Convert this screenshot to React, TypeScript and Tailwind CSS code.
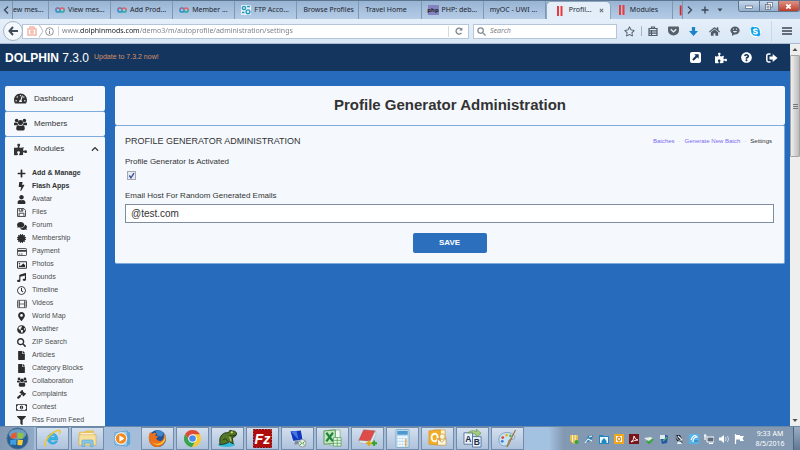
import React from 'react';
import {
  FaTachometerAlt, FaPuzzlePiece, FaPlus, FaBolt, FaUser, FaComments,
  FaCertificate, FaRegImage, FaMusic, FaRegClock, FaMapMarkerAlt,
  FaGlobeAmericas, FaSearch, FaFile, FaGavel, FaRegMoneyBillAlt, FaFilter, FaChevronUp,
  FaQuestionCircle, FaHome, FaRegStar, FaSkype,
} from 'react-icons/fa';

interface Tab {
  title: string;
  icon?: 'loops' | 'joomla' | 'cpanel' | 'php';
  active?: boolean;
}

interface IconProps {
  size: number;
  className?: string;
}

const tabs: Tab[] = [
  { title: 'View mes...', icon: 'loops' },
  { title: 'Add Prod...', icon: 'loops' },
  { title: 'Member ...', icon: 'loops' },
  { title: 'FTP Acco...', icon: 'cpanel' },
  { title: 'Browse Profiles' },
  { title: 'Travel Home' },
  { title: 'PHP: deb...', icon: 'php' },
  { title: 'myOC - UWI ...' },
  { title: 'Profil...', icon: 'joomla', active: true },
  { title: 'Modules', icon: 'joomla' },
];

const GroupIcon: React.FC<IconProps> = ({ size, className }) => (
  <svg viewBox="0 0 14 13" width={size} height={size} className={className} fill="#2c2c2c">
    <circle cx="2.800" cy="2.200" r="1.900" />
    <circle cx="11.200" cy="2.200" r="1.900" />
    <path d="M0 7V5.500Q0 4 1.500 4.300q1.300.7 2.600 0Q3.500 6 4.500 7.200H1Q0 7.200 0 7zM14 7V5.500q0-1.500-1.500-1.200-1.300.7-2.600 0 .6 1.700-.4 2.900H13q1 0 1-.2z" />
    <circle cx="7" cy="4.400" r="2.700" />
    <path d="M2.400 11.200Q2.300 7.400 4.500 7.200q2.500 1.500 5 0 2.200.2 2.100 4Q11.500 13 10 13H4q-1.500 0-1.600-1.800z" />
  </svg>
);

const FloppyIcon: React.FC<IconProps> = ({ size, className }) => (
  <svg viewBox="0 0 10 10" width={size} height={size} className={className} fill="none" stroke="#3c3c3c">
    <path d="M0.600 0.600h6.900l1.900 1.900v6.900H0.600zM2.500 0.600v2.900h4V0.600M2.300 9.400V5.800h5.400v3.600" />
    <path d="M5.300 1v2" strokeWidth="1.200" />
  </svg>
);

const CardIcon: React.FC<IconProps> = ({ size, className }) => (
  <svg viewBox="0 0 12 10" width={size} height={size} className={className} fill="none" stroke="#3c3c3c">
    <rect x="0.600" y="0.800" width="10.800" height="8.400" rx="0.800" />
    <path d="M0.600 3.600h10.800" strokeWidth="2.200" />
    <path d="M2 7.500h1.500M4.300 7.500h2.400" />
  </svg>
);

const FilmIcon: React.FC<IconProps> = ({ size, className }) => (
  <svg viewBox="0 0 12 10" width={size} height={size} className={className} fill="none" stroke="#3c3c3c" strokeWidth="0.900">
    <rect x="0.600" y="0.600" width="10.800" height="8.800" rx="0.600" />
    <path d="M3 0.600v8.800M9 0.600v8.800M3 5h6M0.600 2.800H3M0.600 5H3M0.600 7.200H3M9 2.800h2.400M9 5h2.400M9 7.200h2.400" />
  </svg>
);

const modules: { label: string; icon: React.ComponentType<any>; bold?: boolean; size?: number }[] = [
  { label: 'Add & Manage', icon: FaPlus, bold: true },
  { label: 'Flash Apps', icon: FaBolt, bold: true },
  { label: 'Avatar', icon: FaUser },
  { label: 'Files', icon: FloppyIcon },
  { label: 'Forum', icon: FaComments, size: 10 },
  { label: 'Membership', icon: FaCertificate },
  { label: 'Payment', icon: CardIcon, size: 10 },
  { label: 'Photos', icon: FaRegImage, size: 10 },
  { label: 'Sounds', icon: FaMusic },
  { label: 'Timeline', icon: FaRegClock },
  { label: 'Videos', icon: FilmIcon, size: 10 },
  { label: 'World Map', icon: FaMapMarkerAlt },
  { label: 'Weather', icon: FaGlobeAmericas },
  { label: 'ZIP Search', icon: FaSearch },
  { label: 'Articles', icon: FaFile },
  { label: 'Category Blocks', icon: FaFile },
  { label: 'Collaboration', icon: GroupIcon, size: 10 },
  { label: 'Complaints', icon: FaGavel },
  { label: 'Contest', icon: FaRegMoneyBillAlt, size: 11 },
  { label: 'Rss Forum Feed', icon: FaFilter },
];

const TabIcon: React.FC<{ name: NonNullable<Tab['icon']> }> = ({ name }) => {
  if (name === 'loops') {
    return (
      <svg viewBox="0 0 10 10" className="size-[10px] shrink-0" fill="none" strokeWidth="1.500">
        <circle cx="3" cy="5" r="2.100" stroke="#2d8fd0" />
        <path d="M5 5a2.100 2.100 0 0 1 4.200 0" stroke="#e0606a" />
        <path d="M9.200 5A2.100 2.100 0 0 1 5 5" stroke="#2fa9a2" />
        <path d="M1 4.400a2.100 2.100 0 0 1 2-1.500" stroke="#d0607a" />
      </svg>
    );
  }
  if (name === 'joomla') {
    return (
      <svg viewBox="0 0 10 10" className="size-[10px] shrink-0" fill="#ea3a3c">
        <rect x="2" width="2" height="10" />
        <rect x="5.500" width="2" height="10" />
      </svg>
    );
  }
  if (name === 'cpanel') {
    return (
      <svg viewBox="0 0 10 10" className="size-[10px] shrink-0">
        <rect width="10" height="10" rx="1" fill="#e6f4fa" />
        <g fill="none" stroke="#2696bd" strokeWidth="1.400">
          <circle cx="3" cy="3" r="1.600" />
          <circle cx="7" cy="6.800" r="1.900" />
          <path d="M6 1.500h3M1 7.500h2.500" />
        </g>
      </svg>
    );
  }
  return (
    <span className="flex h-[10px] w-[11px] shrink-0 items-center justify-center bg-[#8582c0] text-[6px] leading-none font-bold text-[#222]">
      php
    </span>
  );
};

const TabStrip: React.FC = () => (
  <div className="flex h-[19px] shrink-0 border-t border-[#5b7490] bg-linear-to-b from-[#98b4d3] to-[#b5cce6] text-[7px] text-[#1c2530]">
    <button aria-label="Scroll tabs left" className="flex w-[13px] items-center justify-center border-r border-[#7e93ab]">
      <svg viewBox="0 0 6 8" className="h-2 w-1.5" fill="none" stroke="#3d4a58" strokeWidth="1.400"><path d="M5 0.500 1.500 4 5 7.500" /></svg>
    </button>
    <button className="w-[36px] shrink-0 overflow-hidden border-r border-[#8097b4] text-left whitespace-nowrap">ew mes...</button>
    {tabs.map((tab, i) => (
      <button
        key={i}
        className={
          tab.active
            ? 'flex min-w-0 flex-1 items-center gap-[4px] overflow-hidden rounded-t-[5px] border-x border-t border-[#8da5c0] bg-[#e3eef9] pl-2 whitespace-nowrap'
            : 'flex min-w-0 flex-1 items-center gap-[3px] overflow-hidden border-r border-[#8097b4] pl-[6px] whitespace-nowrap'
        }
      >
        {tab.icon && <TabIcon name={tab.icon} />}
        <span>{tab.title}</span>
        {tab.active && (
          <svg viewBox="0 0 6 6" className="mr-[6px] ml-auto size-[5px]" stroke="#68727d" strokeWidth="1.300"><path d="M1 1l4 4M5 1 1 5" /></svg>
        )}
      </button>
    ))}
    <div className="flex w-[127px] shrink-0 justify-between">
      <div className="flex items-center">
        <div className="h-full w-[10px] border-r border-[#7e93ab]">
          <svg viewBox="0 0 10 18" className="h-full w-full"><path d="M8.500 4v11" stroke="#d02c30" strokeWidth="2" /></svg>
        </div>
        <button aria-label="Scroll tabs right" className="px-1">
          <svg viewBox="0 0 6 8" className="h-2 w-1.5" fill="none" stroke="#3d4a58" strokeWidth="1.400"><path d="M1 0.500 4.500 4 1 7.500" /></svg>
        </button>
        <button aria-label="New tab" className="px-1">
          <svg viewBox="0 0 8 8" className="size-[8px]" stroke="#3d4a58" strokeWidth="1.400"><path d="M4 0.500v7M0.500 4h7" /></svg>
        </button>
        <button aria-label="List all tabs" className="px-1">
          <svg viewBox="0 0 6 4" className="h-[4px] w-[6px]" fill="#3d4a58"><path d="M0.500 0.500h5L3 3.500z" /></svg>
        </button>
      </div>
      <div className="flex h-[11px] overflow-hidden rounded-b-[3px] border border-t-0 border-[#5f7690]">
        <button aria-label="Minimize" className="flex w-[21px] items-center justify-center border-r border-[#5f7690] bg-linear-to-b from-[#c5d6ea] to-[#96b0cd]">
          <svg viewBox="0 0 8 6" className="h-[6px] w-[8px]"><rect x="0.500" y="3" width="7" height="2.500" fill="#fff" stroke="#56657a" strokeWidth="0.700" /></svg>
        </button>
        <button aria-label="Restore" className="flex w-[19px] items-center justify-center border-r border-[#5f7690] bg-linear-to-b from-[#c5d6ea] to-[#96b0cd]">
          <svg viewBox="0 0 8 8" className="size-[8px]" fill="#fff" stroke="#56657a" strokeWidth="0.700"><rect x="2.500" y="0.500" width="5" height="4.500" /><rect x="0.500" y="2.500" width="5" height="5" /><rect x="2" y="4" width="2" height="2" /></svg>
        </button>
        <button aria-label="Close" className="flex w-[20px] items-center justify-center bg-linear-to-b from-[#dd9184] to-[#bf3a26]">
          <svg viewBox="0 0 8 8" className="size-[7px]" stroke="#fff" strokeWidth="2"><path d="M1.500 1.500l5 5M6.500 1.500l-5 5" /></svg>
        </button>
      </div>
    </div>
  </div>
);

const NavBar: React.FC = () => (
  <div className="flex h-[25px] shrink-0 items-center border-b border-[#a9bccf] bg-linear-to-b from-[#e5effa] to-[#d9e7f5] pr-2 pl-[3px] text-[7px]">
    <button aria-label="Back" className="z-10 flex size-5 shrink-0 items-center justify-center rounded-full border border-[#a4b4c4] bg-[#f4f8fc]">
      <svg viewBox="0 0 10 10" className="size-[10px]" fill="none" stroke="#3f4c5a" strokeWidth="2"><path d="M5 1 1.500 5 5 9M2 5h8" /></svg>
    </button>
    <div className="-ml-px flex h-[15px] min-w-0 flex-1 items-center border border-[#b4c6d8] bg-white pl-1">
      <svg viewBox="0 0 10 10" className="size-[10px] shrink-0" fill="none" stroke="#f1b7a8" strokeWidth="1.500">
        <path d="M1 3h8v6H1zM3 3V1h4v2" /><circle cx="5" cy="6" r="1.300" />
      </svg>
      <svg viewBox="0 0 8 14" className="h-[14px] w-[8px] shrink-0" fill="none" stroke="#b8bec5"><path d="M2 0.500 6 7 2 13.500" /></svg>
      <svg viewBox="0 0 10 10" className="size-[9px] shrink-0" fill="none" stroke="#84888d"><circle cx="5" cy="5" r="4.300" /><path d="M5 2.200v1.200M5 4.300v3.400" strokeWidth="1.200" /></svg>
      <div className="mr-[3px] ml-1 h-[10px] border-l border-[#cfd4d9]" />
      <input
        aria-label="Address"
        type="text"
        defaultValue="www.dolphinmods.com/demo3/m/autoprofile/administration/settings"
        className="min-w-0 flex-1 bg-linear-[90deg,#777b80_18px,#16191d_18px,#16191d_77px,#777b80_77px] bg-clip-text text-transparent outline-none"
      />
      <button aria-label="Reload" className="flex h-[11px] w-[20px] items-center justify-center border-l border-[#d3dae1]">
        <svg viewBox="0 0 10 10" className="size-[8px]" fill="none" stroke="#75818c" strokeWidth="1.600"><path d="M8 7.300A3.700 3.700 0 1 1 8 3" /><path d="M9.200 0.500v4h-4z" fill="#75818c" stroke="none" /></svg>
      </button>
    </div>
    <div className="ml-1 flex h-[15px] w-[144px] items-center gap-1 border border-[#b4c6d8] bg-white pl-[3px]">
      <svg viewBox="0 0 10 10" className="size-[9px]" fill="none" stroke="#828b94" strokeWidth="1.400"><circle cx="4" cy="4" r="3" /><path d="m6.300 6.300 3.200 3.200" /></svg>
      <input aria-label="Search" type="text" placeholder="Search" className="min-w-0 flex-1 italic outline-none placeholder:text-[#7c8085]" />
    </div>
    <div className="ml-[7px] flex w-[168px] shrink-0 items-center justify-between text-[#4e5a66]">
      <button aria-label="Bookmark"><FaRegStar size={11} /></button>
      <span className="-mx-1 h-[10px] border-l border-[#a8b6c4]" />
      <button aria-label="Bookmarks list">
        <svg viewBox="0 0 10 10" className="size-[10px]" fill="none" stroke="currentColor" strokeWidth="1.200"><path d="M1 2.500h8v7H1zM3.500 2.500V1h3v1.500M1 4.800h8M1 7.200h8M3.500 4v5.500" /></svg>
      </button>
      <button aria-label="Pocket">
        <svg viewBox="0 0 12 11" className="h-[10px] w-[11px]"><path d="M1 0.500h10q1 0 1 1V5A6 5.500 0 0 1 0 5V1.500q0-1 1-1z" fill="#55606b" /><path d="m3 3.500 3 3 3-3" fill="none" stroke="#eaf2fa" strokeWidth="1.500" /></svg>
      </button>
      <button aria-label="Downloads">
        <svg viewBox="0 0 10 10" className="size-[9px]" fill="#1d83ca"><path d="M3.200 0h3.600v4.500H10L5 10 0 4.500h3.200z" /></svg>
      </button>
      <button aria-label="Home"><FaHome size={11} /></button>
      <button aria-label="Chat">
        <svg viewBox="0 0 10 10" className="size-[10px]"><ellipse cx="5" cy="4.500" rx="4.600" ry="4" fill="#55606b" /><path d="M2 7v3l3-2z" fill="#55606b" /><path d="M2.800 5a2.300 2 0 0 0 4.400 0z" fill="#dfe9f3" /><path d="M3 3.200h1M6 3.200h1" stroke="#dfe9f3" /></svg>
      </button>
      <button aria-label="Skype" className="rounded-full bg-white text-[#12a5ea]"><FaSkype size={11} /></button>
      <span className="h-[21px] border-l border-[#cbd8e4]" />
      <button aria-label="Menu">
        <svg viewBox="0 0 10 8" className="h-[8px] w-[10px]" stroke="#3c4650" strokeWidth="1.500"><path d="M0 1h10M0 4h10M0 7h10" /></svg>
      </button>
    </div>
  </div>
);

const SiteHeader: React.FC = () => (
  <header className="flex h-[27px] shrink-0 items-center justify-between bg-[#14365e] pr-3 pl-[5px] text-white">
    <div className="flex items-center gap-[5px]">
      <h1 className="text-[12px]"><b>DOLPHIN</b> 7.3.0</h1>
      <a href="#" className="text-[7px] text-[#d68e6a]">Update to 7.3.2 now!</a>
    </div>
    <nav className="flex items-center gap-[14px]">
      <a href="#" aria-label="Open site">
        <svg viewBox="0 0 11 11" className="size-[11px]"><rect width="11" height="11" rx="2" fill="#fff" /><path d="M4.200 2.300h4.500v4.500L7.200 5.300 3.700 8.800 2.200 7.300l3.500-3.500z" fill="#14365e" /></svg>
      </a>
      <a href="#" aria-label="Extensions"><FaPuzzlePiece size={12} /></a>
      <a href="#" aria-label="Help"><FaQuestionCircle size={11} /></a>
      <a href="#" aria-label="Log out">
        <svg viewBox="0 0 12 10" className="h-[10px] w-[12px]"><path d="M4.500 1H2.500Q0.800 1 0.800 2.700v4.600Q0.800 9 2.500 9h2" fill="none" stroke="#fff" strokeWidth="1.500" /><path d="M3.500 3.500h3.200V1L11.500 5 6.700 9V6.500H3.500z" fill="#fff" /></svg>
      </a>
    </nav>
  </header>
);

const Sidebar: React.FC = () => (
  <nav className="w-[100px] shrink-0 text-[8px] text-[#333]">
    <a href="#" className="flex h-[25px] items-center rounded-[2px] bg-[#f5f9fe] pl-[9px]">
      <FaTachometerAlt size={13} className="mr-[7px]" />Dashboard
    </a>
    <a href="#" className="flex h-[25px] items-center rounded-[2px] border-t border-[#7fabdc] bg-[#f5f9fe] pl-[9px]">
      <GroupIcon size={13} className="mr-[7px]" />Members
    </a>
    <div className="rounded-[2px] border-t border-[#7fabdc] bg-[#f5f9fe]">
      <button className="flex h-[24px] w-full items-center pr-[6px] pl-[9px]">
        <FaPuzzlePiece size={13} className="mr-[7px]" />Modules
        <FaChevronUp size={8} className="ml-auto" />
      </button>
      <ul className="pt-[6px] pb-3 text-[7px] text-[#4c4c4c]">
        {modules.map(({ label, icon: Icon, bold, size }) => (
          <li key={label}>
            <a href="#" className={bold ? 'flex h-[13px] items-center font-bold text-[#333]' : 'flex h-[13px] items-center'}>
              <span className="flex w-[27px] shrink-0 justify-center pr-[5px] pl-[11px] text-[#2c2c2c]"><Icon size={size ?? 9} className="shrink-0" /></span>
              {label}
            </a>
          </li>
        ))}
      </ul>
    </div>
  </nav>
);

const SettingsPanel: React.FC = () => (
  <main className="min-w-0 flex-1 text-[#333]">
    <div className="flex h-[39px] items-center justify-center rounded-[2px] bg-[#f5f9fe]">
      <h2 className="text-[15px] font-bold">Profile Generator Administration</h2>
    </div>
    <section className="rounded-[2px] border-t border-r border-b border-[#7fabdc] bg-[#f5f9fe] px-[10px] pb-[10px] text-[8px]">
      <div className="flex items-center justify-between pt-[9px]">
        <h3 className="text-[9px] leading-3">PROFILE GENERATOR ADMINISTRATION</h3>
        <div className="flex gap-1 pr-[2px] text-[6px] text-[#7d6bee]">
          <a href="#">Batches</a>
          <span className="text-[#aaa]">·</span>
          <a href="#">Generate New Batch</a>
          <span className="text-[#aaa]">·</span>
          <span className="text-[#333]">Settings</span>
        </div>
      </div>
      <form onSubmit={(e) => e.preventDefault()}>
        <label htmlFor="activated" className="mt-[9px] block leading-3">Profile Generator Is Activated</label>
        <div className="relative mt-[3px] ml-[2px] size-[9px]">
          <input id="activated" type="checkbox" defaultChecked className="block size-[9px] appearance-none border border-[#a5a9ad] bg-[#e6eaf0]" />
          <svg viewBox="0 0 8 8" className="pointer-events-none absolute inset-0 size-[9px]" fill="none" stroke="#37529c" strokeWidth="1.200"><path d="m2 4 1.500 2L6.200 1.800" /></svg>
        </div>
        <label htmlFor="email-host" className="mt-[10px] block leading-3">Email Host For Random Generated Emails</label>
        <input
          id="email-host"
          type="text"
          defaultValue="@test.com"
          className="mt-[2px] block h-[19px] w-full border border-[#7e8ea0] bg-white px-[5px] text-[10px] outline-none"
        />
        <button type="submit" className="mx-auto mt-[10px] block h-5 w-[74px] rounded-[2px] bg-[#2c6fbd] text-[8px] font-bold text-white">
          SAVE
        </button>
      </form>
    </section>
  </main>
);

const taskIcons: { name: string; drawing: React.ReactNode; plain?: boolean }[] = [
  {
    name: 'Internet Explorer',
    drawing: (
      <>
        <path d="M15.500 11.500H7.800c.3 2.800 4 3.400 5.200 1h2.300C13.800 17.500 5 17.500 4.600 10.300 5 3 14.500 2.500 15.500 9.500zM7.800 8.800h5c-.4-2.500-4.400-2.700-5 0z" fill="#35b5e8" stroke="#1d87c4" strokeWidth="0.400" />
        <path d="M3.500 17.500C-1 18 4 7.500 12 3c6-3.300 7-1 5.500 2" fill="none" stroke="#f0c42f" strokeWidth="1.600" />
      </>
    ),
  },
  {
    name: 'Explorer',
    drawing: (
      <>
        <path d="M1 3h6l1-1.500h9V6h1.500v11H1z" fill="#e8c35d" />
        <path d="M2.500 4.500h14v3h-14z" fill="#fff" />
        <path d="M1 6h18v11H1z" fill="#f6e09a" stroke="#d0a642" strokeWidth="0.600" />
        <path d="M4 18.500V13q0-1.500 1.500-1.500h9q1.500 0 1.500 1.500v5.500h-3V15H7v3.500z" fill="#87c5e6" stroke="#4f99c6" strokeWidth="0.500" />
      </>
    ),
  },
  {
    name: 'Media Player',
    plain: true,
    drawing: (
      <>
        <path d="m2 4 13-2v16L2 16.500z" fill="#9dccee" stroke="#4b95cb" strokeWidth="0.700" />
        <path d="m15 2 3 2v12l-3 2z" fill="#5ea6d8" />
        <circle cx="8.500" cy="10" r="6" fill="#f28a20" stroke="#fff" />
        <path d="m6.700 6.700 5.500 3.300-5.500 3.300z" fill="#fff" />
      </>
    ),
  },
  {
    name: 'Firefox',
    drawing: (
      <>
        <circle cx="10" cy="10" r="9" fill="#21539d" />
        <path d="M8 2q6-2 8.500 3L14 8l-4-1z" fill="#4188cb" />
        <path d="M2 3.500 4.500 5Q7 3 9 4.500L7.500 7l3.500 1-2.500 2q1 3 5 2.500 4-1 3-7.500l1.500 1.500c3 11-10 16-15 9.500C.5 13 0 8 2 3.500z" fill="#ea711c" />
        <path d="M17.500 5q3 8-3.500 11-6 2.500-10-2 5 3 9.500.500Q19 11 17.500 5z" fill="#ffc735" />
      </>
    ),
  },
  {
    name: 'Chrome',
    drawing: (
      <>
        <circle cx="10" cy="10" r="9" fill="#f5cb35" />
        <path d="M2.200 5.500A9 9 0 0 1 17.800 5.500H10L6 11z" fill="#dd4b3c" />
        <path d="M2.200 5.500 6.500 12l6 1.500L9.500 19A9 9 0 0 1 2.200 5.500z" fill="#34a555" />
        <circle cx="10" cy="10" r="4.500" fill="#fff" />
        <circle cx="10" cy="10" r="3.500" fill="#4a8aec" />
      </>
    ),
  },
  {
    name: 'Frog',
    drawing: (
      <>
        <ellipse cx="9" cy="16.500" rx="9" ry="2.500" fill="#32b8d8" />
        <path d="M2 14C1 7 6 3 11 4q1-4 4-2 5 0 4.500 4-2 3-4.500 3l1 6.500-4-2-4 2-6 1z" fill="#52762a" stroke="#1e3511" />
        <path d="M5 12q3-4 5 1M12 7q3 1 7-1" fill="none" stroke="#1e3511" />
        <circle cx="14.500" cy="3.500" r="1.200" fill="#e7d35a" />
        <path d="M12 8q2 3 1.500 5" stroke="#b8b55a" strokeWidth="1.500" fill="none" />
      </>
    ),
  },
  {
    name: 'FileZilla',
    drawing: (
      <>
        <rect x="0.500" y="0.500" width="19" height="19" fill="#b10c0c" stroke="#7b0000" strokeDasharray="2 1" />
        <text x="10" y="15.500" textAnchor="middle" fontSize="15" fontWeight="bold" fontStyle="italic" fill="#fff">Fz</text>
      </>
    ),
  },
  {
    name: 'Remote Desktop',
    drawing: (
      <>
        <path d="m2 2 12-1 2 11-11 1z" fill="#1238bd" stroke="#dce8f3" />
        <path d="m3 2.500 6-.500 2 9z" fill="#4777df" />
        <path d="m7 13 4-.500 1 3-5 1z" fill="#7d8b99" />
        <circle cx="15" cy="15" r="4" fill="#e5ebe7" stroke="#8d9a93" />
        <path d="m12.500 13 2 2-2 2M17.500 13l-2 2 2 2" fill="none" stroke="#4c9944" />
      </>
    ),
  },
  {
    name: 'Excel',
    drawing: (
      <>
        <path d="M7 1h11v16H7z" fill="#eef7ee" stroke="#78a778" strokeWidth="0.700" />
        <path d="m1 2 12-1v14L1 16z" fill="#c3e6bd" stroke="#56985a" />
        <path d="m3.500 4 7 9M10.500 4l-7 9" stroke="#218541" strokeWidth="2.400" />
        <path d="M11 9h8v9h-8zM11 12h8M11 15h8M15 9v9" fill="#e9f5e6" stroke="#51a058" strokeWidth="0.800" />
      </>
    ),
  },
  {
    name: 'Notebook',
    drawing: (
      <>
        <path d="M6 1 18 2 13 13 1 12z" fill="#df4b48" stroke="#b03a37" strokeWidth="0.600" />
        <path d="m1 12 12 1 5-11 1 3-5 11L2 14.500z" fill="#e9eef1" stroke="#9a9fa3" strokeWidth="0.500" />
        <path d="M11.500 12v6M8.500 15h6" stroke="#d9aa18" strokeWidth="2" /><path d="M17 12v6M14.500 15H20" stroke="#35a21e" strokeWidth="2" />
      </>
    ),
  },
  {
    name: 'Calculator',
    drawing: (
      <>
        <rect x="3" y="0.500" width="14" height="19" rx="1" fill="#bfddf0" stroke="#6f9fbf" strokeWidth="0.700" />
        <rect x="4.500" y="2" width="11" height="4" fill="#4f98cd" />
        <path d="M5 8.500h10M5 11.500h10M5 14.500h10M5 17.500h10" stroke="#fff" strokeWidth="1.800" strokeDasharray="2 .65" />
        <path d="M13.500 10.500v8" stroke="#e2a24c" strokeWidth="1.500" />
      </>
    ),
  },
  {
    name: 'Outlook',
    drawing: (
      <>
        <path d="M6 1h12v15H6z" fill="#fff3ce" stroke="#d79b28" strokeWidth="0.700" />
        <path d="m1 2 12-1v16L1 16z" fill="#f5ae22" stroke="#d28a16" strokeWidth="0.600" />
        <ellipse cx="7" cy="9" rx="3.200" ry="4" fill="none" stroke="#fff" strokeWidth="2" />
        <path d="M10 10h9v7h-9zM10 10l4.500 4 4.500-4" fill="#fff6dd" stroke="#bd9146" strokeWidth="0.700" />
        <circle cx="15" cy="8" r="3" fill="#faf0cb" stroke="#c08f38" strokeWidth="0.700" />
      </>
    ),
  },
  {
    name: 'Translator',
    drawing: (
      <>
        <path d="M1 4h9v12H1zM10 8h9v11h-9z" fill="#e9f1fa" stroke="#5c78a4" />
        <text x="5.500" y="13.500" textAnchor="middle" fontSize="9" fontWeight="bold" fill="#1c2a4a">A</text>
        <text x="14.500" y="17" textAnchor="middle" fontSize="9" fontWeight="bold" fill="#1c2a4a">B</text>
        <path d="M5 4q5-4 9-1V0l5 4.500-5 4V6Q10 3 5 4z" fill="#a5cf7e" stroke="#68934a" strokeWidth="0.700" />
      </>
    ),
  },
  {
    name: 'Paint',
    drawing: (
      <>
        <path d="M1 12C0 5 8 2 14 4.500c6 3 4 7-1 6.500-4 1 0 4-3 6C6 19 1 17 1 12z" fill="#c6e2f3" stroke="#688da9" strokeWidth="0.700" />
        <circle cx="5" cy="9" r="1.500" fill="#d84539" /><circle cx="9" cy="6.500" r="1.400" fill="#e9b62a" /><circle cx="13" cy="7" r="1.300" fill="#62a748" /><circle cx="4.500" cy="13" r="1.500" fill="#437fcf" />
        <path d="m18.500 1-7 15-2 3 1-4z" fill="#d59b4e" stroke="#8e652d" strokeWidth="0.700" />
      </>
    ),
  },
];

const trayIcons: { name: string; drawing: React.ReactNode }[] = [
  { name: 'Shield', drawing: <><path d="M1 1h8v4q0 3-4 5-4-2-4-5z" fill="#e1c05a" /><path d="M3.500 1v7M6.200 1v7" stroke="#fff0b4" /><circle cx="7.500" cy="8" r="2" fill="#37a237" /></> },
  { name: 'Network tool', drawing: <><path d="M1 8 4 2l5-1-1 4-4 3z" fill="#2f7fae" /><path d="m1 9 3-4 4 2M5 3l3-1" fill="none" stroke="#eaf3f8" strokeWidth="1.100" /></> },
  { name: 'Folder', drawing: <><path d="M0 1h4l1 1h5v8H0z" fill="#2187c0" /><path d="M1 3h8v6H1z" fill="#e9f6fc" /><path d="m5 4 2.500 3v2h-5V7z" fill="#2187c0" /></> },
  { name: 'Outlook', drawing: <><rect width="10" height="10" fill="#f0a61d" /><path d="M2 2h6v6H2z" fill="#fff" /><ellipse cx="5" cy="5" rx="1.500" ry="2" fill="none" stroke="#e08b10" strokeWidth="1.300" /></> },
  { name: 'Acrobat', drawing: <><rect width="10" height="10" fill="#7a1418" /><path d="M2 8q3-2 3-6 1 4 4 4-3 0-7 2z" fill="none" stroke="#fff" strokeWidth="0.900" /></> },
  { name: 'Safely remove', drawing: <><path d="m0 4 7-1 2 2-5 2z" fill="#e6eae7" /><path d="m3 7 2 2 4-4" fill="none" stroke="#35a838" strokeWidth="2" /></> },
  { name: 'Monitor', drawing: <><path d="M1 1h6l2 1-1 7-5 1z" fill="#2557a8" /><path d="M1 1h5v4H1z" fill="#dfeaf5" /><path d="m4 7 4-4" stroke="#55b85b" strokeWidth="1.500" /></> },
  { name: 'Satellite', drawing: <><path d="M1 1q1 6 8 7L7 9 4 8 2 5z" fill="#1c2024" /><path d="M2 1h4l2 4-3 1z" fill="#1c2024" /><path d="m4 2 4 4" stroke="#eef1f3" strokeWidth="1.200" /><path d="m4 7-1 3h5L7 8z" fill="#e8eaec" /></> },
  { name: 'Windows', drawing: <><rect width="10" height="10" fill="#56b3e8" /><path d="M2 6q3-7 6-3-4 0-4 5" fill="none" stroke="#fff" strokeWidth="1.200" /><path d="M5 7h4" stroke="#1e72b3" /></> },
  { name: 'Network', drawing: <><path d="M3 3h7v5H3z" fill="#5c6c7c" stroke="#fff" /><path d="M1 0v6M0 2h3M5 9.500h4" stroke="#fff" strokeWidth="1.200" /></> },
  { name: 'Volume', drawing: <><path d="M0 3.500h2L5 1v8L2 6.500H0z" fill="#fff" /><path d="M6.500 3q1.200 2 0 4M8.500 2q2 3 0 6" fill="none" stroke="#e8edf2" strokeWidth="0.800" /></> },
  { name: 'Action center', drawing: <><path d="M1.500 0v10" stroke="#fff" strokeWidth="1.200" /><path d="M2 1h4v1h4L8.500 4.500 10 7H6V5.500H2z" fill="#fff" /></> },
];

const Taskbar: React.FC = () => (
  <footer className="flex h-6 shrink-0 items-stretch border-t border-[#6b87a8] bg-[#a3bddb]">
    <button aria-label="Start" className="flex w-[34px] shrink-0 items-center justify-center bg-linear-to-r from-[#8298b3] to-[#8fa9c6]">
      <svg viewBox="0 0 24 24" className="size-[23px]">
        <circle cx="12" cy="12" r="11" fill="#285f91" stroke="#4e6f91" />
        <ellipse cx="12" cy="7.500" rx="9" ry="5.500" fill="#6d9dc2" />
        <path d="m6 7 5-1.500v6L4.500 12z" fill="#e8592f" />
        <path d="M12.500 5.500q3 1.500 6 1L17.500 12q-3 .500-5.500-.500z" fill="#8ec63f" />
        <path d="m4.500 13.500 6.500-.500-.500 6q-3-1.500-6 0z" fill="#3c9fe3" />
        <path d="M12.300 13q3 1 5.500.500l-1 5.500q-2 .500-5-.500z" fill="#fbcb3a" />
      </svg>
    </button>
    <div className="flex shrink-0 gap-[2px] pl-[2px] font-['Liberation_Sans',Arial,sans-serif]">
      {taskIcons.map(({ name, drawing, plain }) => (
        <button
          key={name}
          aria-label={name}
          className={
            plain
              ? 'flex w-[33px] items-center justify-center'
              : 'flex w-[33px] items-center justify-center border border-[#748ba8] bg-linear-to-b from-[#d3dfee] to-[#adc2dc]'
          }
        >
          <svg viewBox="0 0 20 20" className="size-[19px]">{drawing}</svg>
        </button>
      ))}
    </div>
    <div className="flex min-w-0 flex-1 items-center justify-end bg-linear-to-r from-[#a3c1e0] from-[25px] to-[#8398b1] to-[40px]">
      <div className="flex gap-[5px]">
        {trayIcons.map(({ name, drawing }) => (
          <button key={name} aria-label={name}>
            <svg viewBox="0 0 10 10" className="size-[10px]">{drawing}</svg>
          </button>
        ))}
      </div>
      <div className="w-[49px] pl-[3px] text-center text-[7px] leading-[10px] text-white">
        <div>9:33 AM</div>
        <div>8/5/2016</div>
      </div>
      <div className="h-full w-[7px] border-l border-[#4c6480] bg-linear-to-b from-[#9badc2] to-[#5f7894]" />
    </div>
  </footer>
);

const App: React.FC = () => (
  <div className="flex h-screen flex-col overflow-hidden font-['Noto_Sans',sans-serif]">
    <TabStrip />
    <NavBar />
    <div className="flex min-h-0 flex-1 font-['Liberation_Sans',Arial,sans-serif]">
      <div className="flex min-w-0 flex-1 flex-col bg-[#276bbd]">
        <SiteHeader />
        <div className="flex min-h-0 flex-1 items-start gap-[10px] overflow-hidden pt-[15px] pr-[5px] pl-[5px]">
          <Sidebar />
          <SettingsPanel />
        </div>
      </div>
      <div className="flex w-[10px] shrink-0 flex-col bg-[#eeeeee]">
        <svg viewBox="0 0 10 11" className="h-[11px] w-[10px]" fill="#505050"><path d="M5 4 7.500 7h-5z" /></svg>
        <div className="flex h-[102px] flex-col items-center justify-center gap-px rounded-[1px] border border-[#a5a5a5] bg-linear-to-r from-[#f0f0f0] to-[#bcbcbc]">
          <div className="h-px w-[5px] bg-[#777]" />
          <div className="h-px w-[5px] bg-[#777]" />
          <div className="h-px w-[5px] bg-[#777]" />
        </div>
        <svg viewBox="0 0 10 11" className="mt-auto h-[11px] w-[10px]" fill="#505050"><path d="M5 7 7.500 4h-5z" /></svg>
      </div>
    </div>
    <Taskbar />
  </div>
);

export default App;
